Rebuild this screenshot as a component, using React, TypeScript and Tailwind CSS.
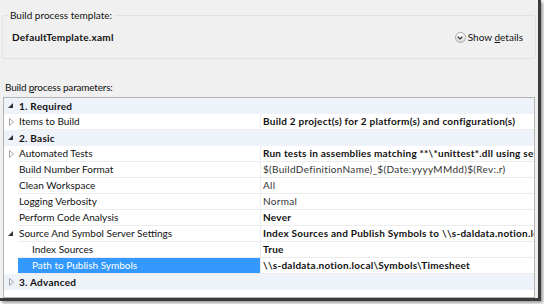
import { ChevronDown } from "lucide-react"

type Row = {
  name: string
  value?: string
  kind: "cat" | "item"
  expander?: "open" | "closed"
  bold?: boolean
  indent?: boolean
  selected?: boolean
}

const rows: Row[] = [
  { name: "1. Required", kind: "cat", expander: "open" },
  { name: "Items to Build", value: "Build 2 project(s) for 2 platform(s) and configuration(s)", kind: "item", expander: "closed", bold: true },
  { name: "2. Basic", kind: "cat", expander: "open" },
  { name: "Automated Tests", value: "Run tests in assemblies matching **\\*unittest*.dll using settings from $(Solution)\\Local.testsettings", kind: "item", expander: "closed", bold: true },
  { name: "Build Number Format", value: "$(BuildDefinitionName)_$(Date:yyyyMMdd)$(Rev:.r)", kind: "item" },
  { name: "Clean Workspace", value: "All", kind: "item" },
  { name: "Logging Verbosity", value: "Normal", kind: "item" },
  { name: "Perform Code Analysis", value: "Never", kind: "item", bold: true },
  { name: "Source And Symbol Server Settings", value: "Index Sources and Publish Symbols to \\\\s-daldata.notion.local\\Symbols\\Timesheet", kind: "item", expander: "open", bold: true },
  { name: "Index Sources", value: "True", kind: "item", bold: true, indent: true },
  { name: "Path to Publish Symbols", value: "\\\\s-daldata.notion.local\\Symbols\\Timesheet", kind: "item", bold: true, indent: true, selected: true },
  { name: "3. Advanced", kind: "cat", expander: "closed" },
]

function Expander({ state }: { state?: "open" | "closed" }) {
  if (state === "open")
    return (
      <svg width="6" height="6" viewBox="0 0 6 6">
        <path d="M5 0 L5 5 L0 5 Z" fill="#333" />
      </svg>
    )
  if (state === "closed")
    return (
      <svg width="5" height="8" viewBox="0 0 5 8">
        <path d="M0.5 0.5 L4.5 4 L0.5 7.5 Z" fill="none" stroke="#a6a6a6" strokeWidth="1" />
      </svg>
    )
  return null
}

export default function App() {
  return (
    <div className="w-[544px] h-[304px] bg-white overflow-hidden" style={{ fontFamily: 'Lato, "Open Sans", sans-serif' }}>
      <div className="w-[541px] h-[301px] bg-[#f0f0f0] border-r-[3px] border-b-[3px] border-[#3c3c3c] shadow-[2px_2px_3px_rgba(0,0,0,0.4)] text-[10px] text-[#111] pt-[15px]">
        {/* template group */}
        <div className="relative mx-[2px] w-[534px] h-[44px] border border-[#dde3ea] rounded-[3px] flex items-center justify-between pl-[9px] pr-[12px] pt-[1px]">
          <span className="absolute -top-[8px] left-[5px] px-[2px] bg-[#f0f0f0]">Build process template:</span>
          <span className="font-bold tracking-[0.25px]">DefaultTemplate.xaml</span>
          <span className="flex items-center gap-[2px]">
            <span className="w-[11px] h-[11px] rounded-full border border-[#a9a9a9] bg-gradient-to-b from-white to-[#dcdcdc] flex items-center justify-center">
              <ChevronDown size={8} strokeWidth={3.5} className="text-[#333]" />
            </span>
            <span>
              Show <span className="underline">d</span>etails
            </span>
          </span>
        </div>

        <div className="pl-[5px] mt-[18px] h-[20px] leading-[20px] tracking-[-0.2px]">
          Build <span className="underline">p</span>rocess parameters:
        </div>

        {/* property grid */}
        <div className="mx-[3px] w-[532px] h-[201px] border border-[#b4b4b4] bg-white overflow-hidden">
          {rows.map((r) =>
            r.kind === "cat" ? (
              <div key={r.name} className="flex items-center h-[16px] bg-[#eef2f9] font-bold tracking-[0.25px]">
                <span className="w-[14px] flex justify-center">
                  <Expander state={r.expander} />
                </span>
                <span className="pl-[1px] whitespace-nowrap">{r.name}</span>
              </div>
            ) : (
              <div key={r.name} className="flex h-[16px]">
                <span className="w-[14px] shrink-0 flex items-center justify-center">
                  <Expander state={r.expander} />
                </span>
                <span
                  className={
                    "w-[243px] shrink-0 flex items-center whitespace-nowrap border-b border-r border-[#ececec] " +
                    (r.indent ? "pl-[14px] " : "pl-[1px] ") +
                    (r.selected ? "bg-[#3399ff] text-white" : "")
                  }
                >
                  {r.name}
                </span>
                <span
                  className={
                    "flex-1 flex items-center whitespace-nowrap overflow-hidden pl-[2px] border-b border-[#ececec] " +
                    (r.bold ? "font-bold tracking-[0.25px]" : "text-[#333] tracking-[0.3px]")
                  }
                >
                  {r.value}
                </span>
              </div>
            )
          )}
        </div>
      </div>
    </div>
  )
}
